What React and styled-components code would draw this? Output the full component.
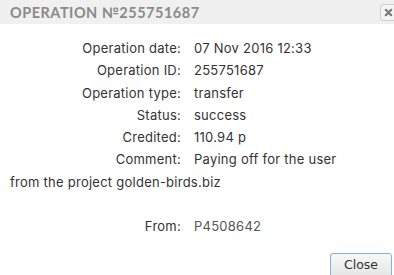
import React from "react";
import styled, { createGlobalStyle } from "styled-components";

const Global = createGlobalStyle`
  html, body { margin: 0; padding: 0; background: #fff; }
  body { font-family: Inter, "Open Sans", sans-serif; }
`;

const Dialog = styled.div`
  width: 394px;
  height: 275px;
  overflow: hidden;
  background: #fff;
  display: flex;
  flex-direction: column;
`;

const Header = styled.div`
  height: 24px;
  background: #f0f0f0;
  display: flex;
  align-items: center;
  justify-content: space-between;
  padding-left: 10px;
`;

const Title = styled.h2`
  margin: 0;
  font-family: Lato, sans-serif;
  font-weight: 700;
  font-size: 14.5px;
  letter-spacing: 0.5px;
  color: #8a8a8a;
  text-transform: uppercase;
`;

const CloseX = styled.button`
  width: 17px;
  height: 17px;
  margin-right: -3px;
  margin-top: 1px;
  border: 1px solid #cfcfcf;
  border-radius: 3px;
  background: #f4f4f4;
  padding: 0;
  display: flex;
  align-items: center;
  justify-content: center;
`;

const Body = styled.div`
  padding: 13px 40px 0 10px;
  font-size: 13px;
  letter-spacing: 0.25px;
  line-height: 22.3px;
  color: #333;
  flex: 1;
`;

const Line = styled.div`
  min-height: 22.3px;
`;

const Label = styled.span`
  display: inline-block;
  width: 171px;
  text-align: right;
  margin-right: 13px;
  color: #333;
`;

const Value = styled.span`
  color: ${(p) => p.color || "#333"};
`;

const Footer = styled.div`
  display: flex;
  justify-content: flex-end;
  padding: 0 2px 0 0;
  height: 22px;
`;

const Button = styled.button`
  width: 62px;
  height: 26px;
  border: 1px solid #7fb2e5;
  border-radius: 3px;
  background: linear-gradient(#f8f8f8, #e4e4e4);
  font-family: "DejaVu Sans", sans-serif;
  font-size: 12.5px;
  color: #333;
  padding: 0 0 4px;
`;

const rows = [
  ["Operation date:", "07 Nov 2016 12:33"],
  ["Operation ID:", "255751687"],
  ["Operation type:", "transfer"],
  ["Status:", "success"],
  ["Credited:", "110.94 р"],
  ["Comment:", "Paying off for the user from the project golden-birds.biz"],
];

export default function App() {
  return (
    <Dialog>
      <Global />
      <Header>
        <Title>Operation №255751687</Title>
        <CloseX aria-label="close">
          <svg width="9" height="9" viewBox="0 0 10 10">
            <path d="M2 2 L8 8 M8 2 L2 8" stroke="#777" strokeWidth="2.4" strokeLinecap="round" />
          </svg>
        </CloseX>
      </Header>
      <Body>
        {rows.map(([l, v]) => (
          <Line key={l}>
            <Label>{l}</Label>
            <Value>{v}</Value>
          </Line>
        ))}
        <Line />
        <Line>
          <Label>From:</Label>
          <Value color="#555">P4508642</Value>
        </Line>
      </Body>
      <Footer>
        <Button>Close</Button>
      </Footer>
    </Dialog>
  );
}
